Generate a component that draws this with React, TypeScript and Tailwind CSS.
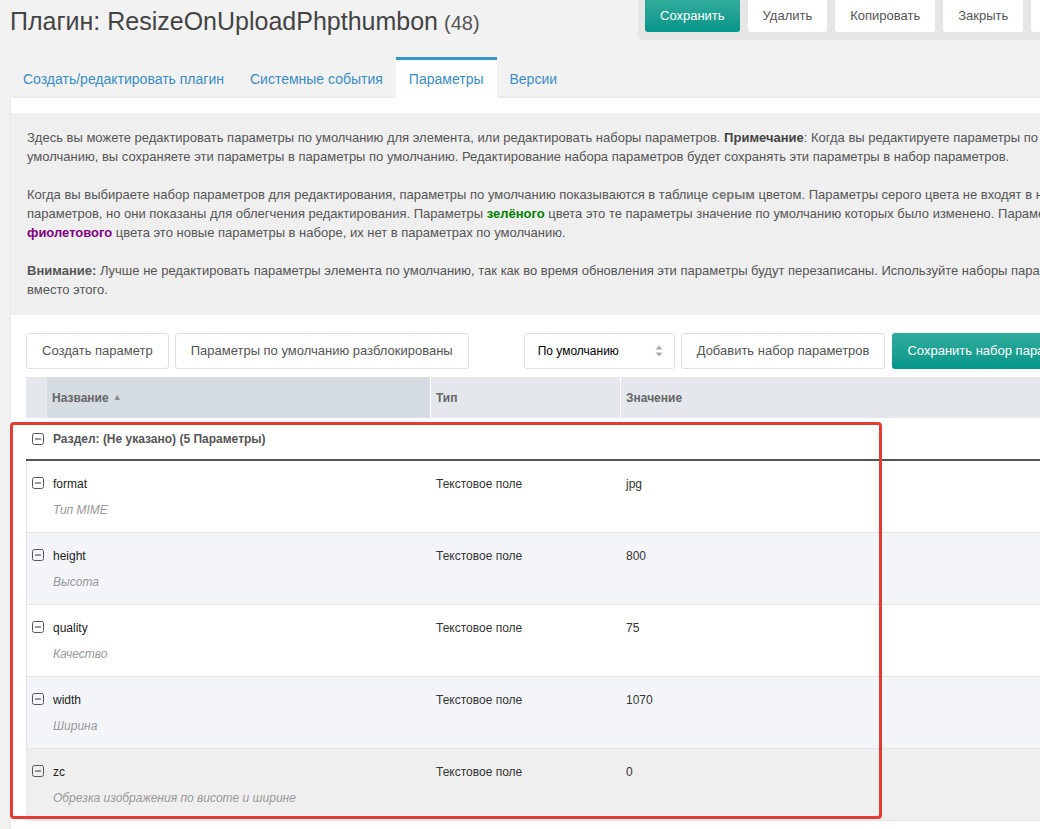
import React from "react";

function MinusBox() {
  return (
    <svg width="12" height="12" viewBox="0 0 12 12" className="block">
      <rect x="0.5" y="0.5" width="11" height="11" rx="2" fill="none" stroke="#555" strokeWidth="1" />
      <line x1="3" y1="6" x2="9" y2="6" stroke="#555" strokeWidth="1.2" />
    </svg>
  );
}

function SelectArrows() {
  return (
    <svg width="8" height="12" viewBox="0 0 8 12" className="block">
      <path d="M4 0.5 L7.5 4.5 L0.5 4.5 Z" fill="#aaa" />
      <path d="M4 11.5 L7.5 7.5 L0.5 7.5 Z" fill="#aaa" />
    </svg>
  );
}

export default function App() {
  const rows = [
    { name: "format", desc: "Тип MIME", value: "jpg", bg: "bg-white" },
    { name: "height", desc: "Высота", value: "800", bg: "bg-[#f4f5f8]" },
    { name: "quality", desc: "Качество", value: "75", bg: "bg-white" },
    { name: "width", desc: "Ширина", value: "1070", bg: "bg-[#f4f5f8]" },
    { name: "zc", desc: "Обрезка изображения по висоте и ширине", value: "0", bg: "bg-[#efefef]" },
  ];

  const tabs = ["Создать/редактировать плагин", "Системные события", "Параметры", "Версии"];

  return (
    <div className="relative w-[1040px] h-[829px] overflow-hidden bg-[#f2f2f2] font-['Liberation_Sans',Arial,sans-serif]">
      <div className="w-[1200px]">
        {/* header */}
        <div className="flex h-[57px] items-start">
          <div className="w-[638px] pl-[10px] pt-[4px] whitespace-nowrap">
            <span className="text-[25px] leading-[34px] text-[#444]">Плагин: ResizeOnUploadPhpthumbon</span>
            <span className="ml-[6px] text-[20px] text-[#555]">(48)</span>
          </div>
          <div className="flex gap-2 bg-[#e6e6e6] rounded-bl-[5px] pl-[7px] pr-2 pb-2">
            <button className="h-8 px-[15px] rounded-b-[3px] bg-gradient-to-b from-[#2fab9b] to-[#00968a] text-white text-[13px]">
              Сохранить
            </button>
            <button className="h-8 px-[15px] rounded-b-[3px] bg-white text-[#555] text-[13px]">Удалить</button>
            <button className="h-8 px-[15px] rounded-b-[3px] bg-white text-[#555] text-[13px]">Копировать</button>
            <button className="h-8 px-[15px] rounded-b-[3px] bg-white text-[#555] text-[13px]">Закрыть</button>
            <button className="h-8 px-[15px] rounded-b-[3px] bg-white text-[#555] text-[13px]">Отмена</button>
          </div>
        </div>

        {/* tabs */}
        <div className="flex pl-[10px]">
          {tabs.map((t) => (
            <div
              key={t}
              className={`h-[41px] px-[13px] flex items-center border-t-[3px] text-[14px] text-[#3a8cc7] whitespace-nowrap ${
                t === "Параметры" ? "border-[#3697cd] bg-white" : "border-transparent"
              }`}
            >
              {t}
            </div>
          ))}
        </div>

        {/* panel */}
        <div className="ml-[11px] bg-white shadow-[0_0_3px_rgba(0,0,0,0.08)] pt-[15px] h-[740px]">
          <div className="bg-[#efefef] px-4 pt-[15px] pb-[16px] text-[13px] leading-[19px] text-[#555] whitespace-nowrap">
            <p>
              Здесь вы можете редактировать параметры по умолчанию для элемента, или редактировать наборы параметров.{" "}
              <b className="text-[#444]">Примечание</b>: Когда вы редактируете параметры по
              <br />
              умолчанию, вы сохраняете эти параметры в параметры по умолчанию. Редактирование набора параметров будет сохранять эти параметры в набор параметров.
            </p>
            <p className="mt-[19px]">
              Когда вы выбираете набор параметров для редактирования, параметры по умолчанию показываются в таблице{" "}
              <b className="text-[#777]">серым</b> цветом. Параметры серого цвета не входят в набор
              <br />
              параметров, но они показаны для облегчения редактирования. Параметры{" "}
              <b className="text-[#008000]">зелёного</b> цвета это те параметры значение по умолчанию которых было изменено. Параметры
              <br />
              <b className="text-[#800080]">фиолетового</b> цвета это новые параметры в наборе, их нет в параметрах по умолчанию.
            </p>
            <p className="mt-[19px]">
              <b>Внимание:</b> Лучше не редактировать параметры элемента по умолчанию, так как во время обновления эти параметры будут перезаписаны. Используйте наборы параметров
              <br />
              вместо этого.
            </p>
          </div>

          <div className="px-[15px]">
            {/* toolbar */}
            <div className="mt-[18px] flex items-center h-9 text-[13px] text-[#555]">
              <button className="h-9 px-[15px] border border-[#e0e0e0] rounded-[3px] bg-white">Создать параметр</button>
              <button className="ml-[6px] h-9 px-[15px] border border-[#e0e0e0] rounded-[3px] bg-white">
                Параметры по умолчанию разблокированы
              </button>
              <div className="ml-[55px] h-9 w-[151px] border border-[#e0e0e0] rounded-[3px] bg-white flex items-center justify-between pl-[13px] pr-[11px] text-[12px] text-black">
                <span>По умолчанию</span>
                <SelectArrows />
              </div>
              <button className="ml-[6px] h-9 px-[15px] border border-[#e0e0e0] rounded-[3px] bg-white">
                Добавить набор параметров
              </button>
              <button className="ml-[7px] h-9 px-[15px] rounded-[3px] bg-gradient-to-b from-[#2fab9b] to-[#00968a] text-white whitespace-nowrap">
                Сохранить набор параметров
              </button>
            </div>

            {/* table */}
            <div className="relative mt-2 text-[12px]">
              <div className="flex h-[41px] bg-[#e4e8ec] font-bold text-[#666]">
                <div className="w-[21px]" />
                <div className="w-[384px] bg-[#d5dce2] border-r border-white pl-[5px] flex items-center gap-[4px]">
                  <span>Название</span>
                  <span className="text-[9px] text-[#888]">▲</span>
                </div>
                <div className="w-[190px] border-r border-white pl-[5px] flex items-center">Тип</div>
                <div className="flex-1 pl-[5px] flex items-center">Значение</div>
              </div>

              <div className="flex items-center h-[43px] pt-[1px] border-b-2 border-[#555] bg-white font-bold text-[#555]">
                <div className="w-[21px] pl-[6px]">
                  <MinusBox />
                </div>
                <div className="pl-[6px]">Раздел: (Не указано) (5 Параметры)</div>
              </div>

              {rows.map((r) => (
                <div key={r.name} className={`flex h-[72px] border-l border-b border-[#e6e6e6] ${r.bg}`}>
                  <div className="w-[20px] pl-[5px] pt-[16px]">
                    <MinusBox />
                  </div>
                  <div className="w-[384px] pl-[6px] pt-[15px]">
                    <div className="leading-4 text-[#222]">{r.name}</div>
                    <div className="mt-[10px] leading-4 italic text-[#999] whitespace-nowrap">{r.desc}</div>
                  </div>
                  <div className="w-[190px] pl-[5px] pt-[15px] leading-4 text-[#333]">Текстовое поле</div>
                  <div className="flex-1 pl-[5px] pt-[15px] leading-4 text-[#333]">{r.value}</div>
                </div>
              ))}

              {/* red annotation frame */}
              <div className="absolute left-[-16px] top-[45px] w-[872px] h-[397px] border-[3px] border-[#e53b35] rounded-[4px] pointer-events-none" />
            </div>
          </div>
        </div>
      </div>
    </div>
  );
}
